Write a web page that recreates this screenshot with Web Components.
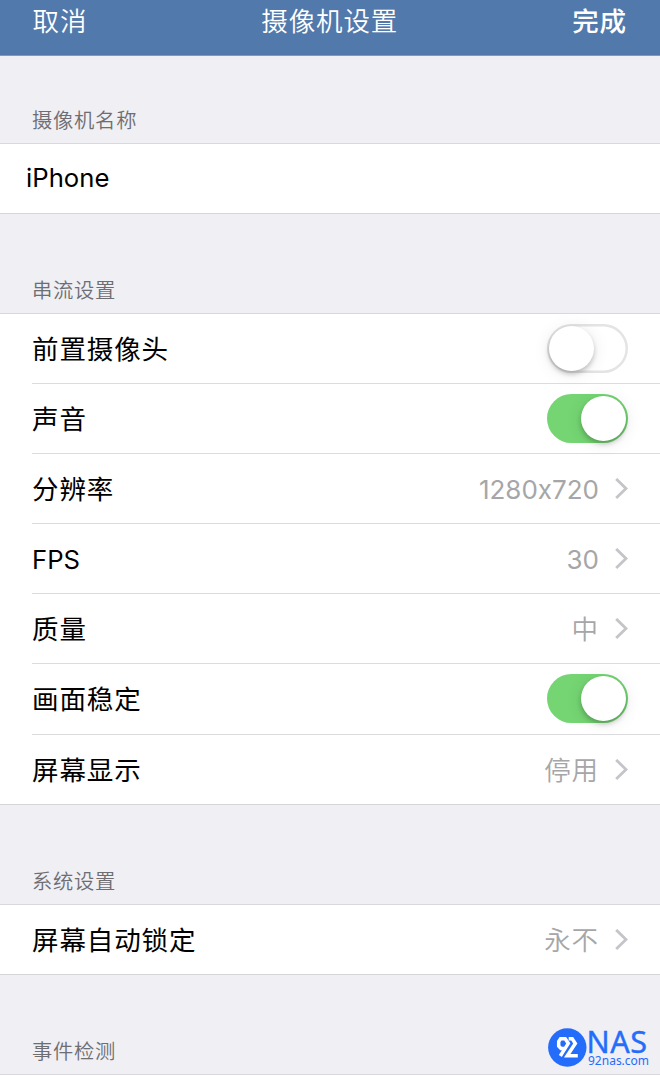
<!DOCTYPE html>
<html lang="zh-CN">
<head>
<meta charset="utf-8">
<title>摄像机设置</title>
<style>
html, body { margin: 0; height: 100%; overflow: hidden; background: #efeff4; }
body { font-family: Inter, "Noto Sans CJK SC", sans-serif; color: #000; font-variant-ligatures: none; font-feature-settings: "calt" 0; }
</style>
</head>
<body>
<settings-page></settings-page>
<script>
const define = (name, html) => {
  const t = document.createElement('template');
  t.innerHTML = html;
  customElements.define(name, class extends HTMLElement {
    constructor() {
      super();
      this.attachShadow({ mode: 'open' }).append(t.content.cloneNode(true));
    }
  });
};

define('nav-bar', `
<style>
:host { display: grid; grid-template-columns: 1fr auto 1fr; align-items: start; height: 56px; box-sizing: border-box;
  padding: 1px 33px 0 32.5px; background: #5179ac; border-bottom: 1px solid #7f9abf; color: #fff;
  font-size: 26.5px; line-height: 40px; letter-spacing: .9px; font-weight: 350; white-space: nowrap; }
.right { text-align: right; font-weight: 500; }
</style>
<span><slot name="left"></slot></span><span><slot></slot></span><span class="right"><slot name="right"></slot></span>`);

define('setting-group', `
<style>
:host { display: block; }
.caption { display: flex; align-items: flex-end; height: var(--head, 99px); box-sizing: border-box; padding: 0 32px 7px;
  font-size: 20.3px; line-height: 30px; letter-spacing: .75px; color: #6d6d72; font-weight: 350; }
.rows { background: #fff; border-top: 1px solid #d9d9dd; }
</style>
<div class="caption"><slot name="caption"></slot></div>
<div class="rows"><slot></slot></div>`);

define('setting-row', `
<style>
:host { display: flex; align-items: stretch; height: 70px; padding-left: 32px; }
:host([tall]) { height: 71px; }
.line { flex: 1; display: flex; align-items: center; justify-content: space-between; box-sizing: border-box;
  padding-right: 32px; border-bottom: 1px solid #dcdcde; font-size: 26.5px; letter-spacing: .9px; line-height: 40px; }
:host([last]) { padding-left: 0; }
:host([last]) .line { padding-left: 32px; border-color: #d5d5da; }
:host([field]) .line { padding-left: 26px; }
:host([latin]) .label { font-size: 25.7px; letter-spacing: 0; padding-top: 2px; }
:host([field]) .label { padding: 0 0 2px; }
.end { display: flex; align-items: center; color: #a6a6a8; font-weight: 350; }
</style>
<div class="line"><span class="label"><slot></slot></span><span class="end"><slot name="end"></slot></span></div>`);

define('row-value', `
<style>
:host { display: flex; align-items: center; gap: 16px; }
:host([number]) span { font-size: 26px; letter-spacing: 0; font-weight: 400; padding-top: 2px; }
svg { display: block; }
</style>
<span><slot></slot></span>
<svg width="13" height="22" viewBox="0 0 13 22" fill="none" stroke="#c4c4c9" stroke-width="2.8"><path d="M1.2 .9 11 10.5 1.2 20.1"/></svg>`);

define('toggle-switch', `
<style>
:host { display: flex; width: 81px; height: 49px; margin-bottom: 1px; box-sizing: border-box; padding: 2px; border-radius: 25px; background: #fff; box-shadow: inset 0 0 0 2.5px #e4e4e5; }
i { display: block; width: 45px; height: 45px; border-radius: 50%; background: #fff; box-shadow: 0 3px 5px rgba(0,0,0,.22), 0 2px 18px rgba(0,0,0,.09); }
:host([on]) { justify-content: flex-end; background: #74d572; box-shadow: none; }
</style><i></i>`);

define('site-mark', `
<style>
:host { display: flex; position: absolute; left: 546px; top: 1025px; color: #246dfb; font-family: "Noto Sans", sans-serif; white-space: nowrap; }
svg { display: block; flex: none; }
.words { display: flex; flex-direction: column; padding-top: 2px; }
.name { font-size: 30.5px; line-height: 28px; letter-spacing: .6px; margin-left: -1.5px; -webkit-text-stroke: .4px currentColor; }
.host { font-size: 12px; line-height: 12px; letter-spacing: 0; }
</style>
<svg width="42" height="44" viewBox="0 0 42 44">
<circle cx="21.3" cy="22.5" r="19.2" fill="#246dfb"/>
<g fill="none" stroke="#fff" stroke-width="3.5">
<path d="M14.3 31 22.3 18.4 19.2 13.8H14.6L12.7 16.6V21L15 23.4H19"/>
<path d="M22.7 13.8H26.2L29.3 18.4 21.2 30.7H31.8"/>
</g></svg>
<div class="words"><span class="name">NAS</span><span class="host">92nas.com</span></div>`);

define('settings-page', `
<style>:host { display: block; position: relative; width: 660px; height: 1076px; overflow: hidden; background: #efeff4; }</style>
<nav-bar><span slot="left">取消</span>摄像机设置<span slot="right">完成</span></nav-bar>
<setting-group style="--head:87px"><span slot="caption">摄像机名称</span>
  <setting-row last field latin>iPhone</setting-row>
</setting-group>
<setting-group><span slot="caption">串流设置</span>
  <setting-row>前置摄像头<toggle-switch slot="end"></toggle-switch></setting-row>
  <setting-row>声音<toggle-switch slot="end" on></toggle-switch></setting-row>
  <setting-row>分辨率<row-value slot="end" number>1280x720</row-value></setting-row>
  <setting-row latin>FPS<row-value slot="end" number>30</row-value></setting-row>
  <setting-row>质量<row-value slot="end">中</row-value></setting-row>
  <setting-row tall>画面稳定<toggle-switch slot="end" on></toggle-switch></setting-row>
  <setting-row last>屏幕显示<row-value slot="end">停用</row-value></setting-row>
</setting-group>
<setting-group><span slot="caption">系统设置</span>
  <setting-row last>屏幕自动锁定<row-value slot="end">永不</row-value></setting-row>
</setting-group>
<setting-group><span slot="caption">事件检测</span>
  <setting-row></setting-row>
</setting-group>
<site-mark></site-mark>`);
</script>
</body>
</html>
